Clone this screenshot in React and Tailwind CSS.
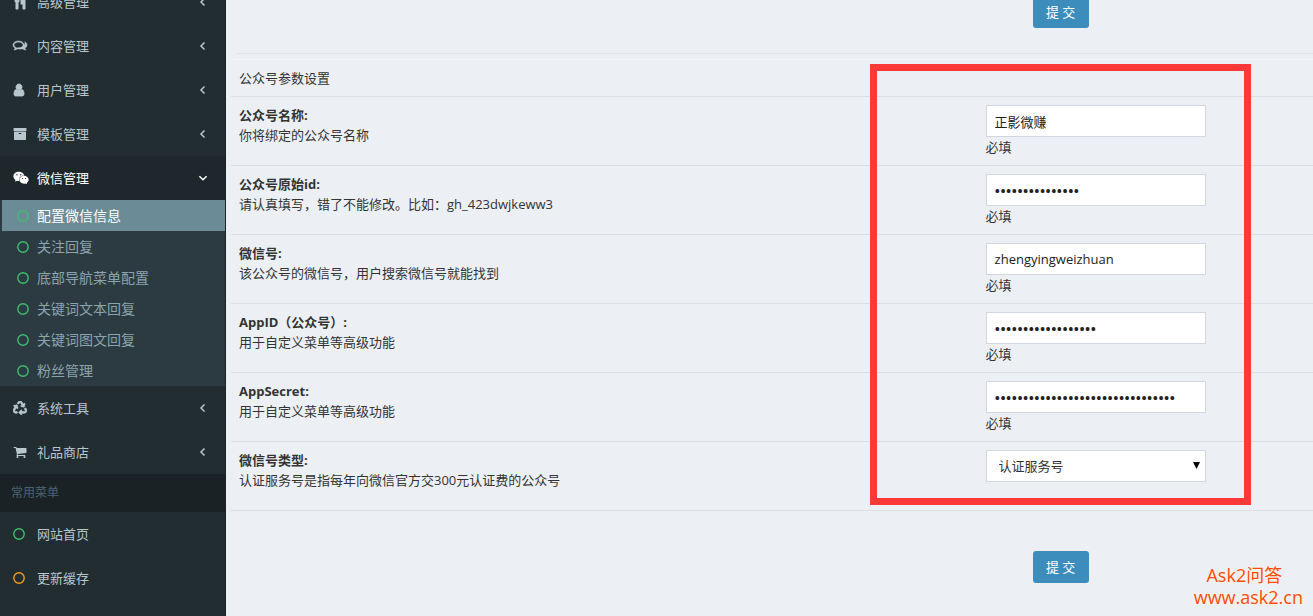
import React from "react";
import { FaRecycle, FaWeixin } from "react-icons/fa";

const iconPaths = {
  cutlery:
    "M832 128v640q0 61-35.500 111t-92.500 70v779q0 52-38 90t-90 38h-128q-52 0-90-38t-38-90v-779q-57-20-92.500-70t-35.500-111v-640q0-26 19-45t45-19 45 19 19 45v416q0 26 19 45t45 19 45-19 19-45v-416q0-26 19-45t45-19 45 19 19 45v416q0 26 19 45t45 19 45-19 19-45v-416q0-26 19-45t45-19 45 19 19 45zm768 0v1600q0 52-38 90t-90 38h-128q-52 0-90-38t-38-90v-512h-224q-13 0-22.500-9.500t-9.500-22.500v-800q0-132 94-226t226-94h256q26 0 45 19t19 45z",
  comments:
    "M704 384q-153 0-286 52t-211.500 141-78.500 191q0 82 53 158t149 132l97 56-35 84q34-20 62-39l44-31 53 10q78 14 153 14 153 0 286-52t211.500-141 78.500-191-78.500-191-211.500-141-286-52zM704 256q191 0 353.500 68.500t256.500 186.500 94 257-94 257-256.500 186.500-353.500 68.500q-86 0-176-16-124 88-278 128-36 9-86 16h-3q-11 0-20.500-8t-11.500-21q-1-3-1-6.500t0.500-6.500 2-6l2.500-5t3.500-5.500 4-5 4.500-5 4-4.500q5-6 23-25t26-29.500 22.500-29 25-38.500 20.500-44q-124-72-195-177t-71-224q0-139 94-257t256.500-186.500 353.500-68.500zM1526 1169q10 24 20.500 44t25 38.500 22.500 29 26 29.500 23 25q1 1 4 4.500t4.500 5 4 5 3.500 5.500l2.500 5t2 6 0.500 6.500-1 6.500q-3 14-13 22t-22 7q-50-7-86-16-154-40-278-128-90 16-176 16-271 0-472-132 58 4 88 4 161 0 309-45t264-129q125-92 192-212t67-254q0-77-23-152 129 71 204 178t75 230q0 120-71 224.500t-195 176.500z",
  user: "M1408 1399q0 109-62.500 187t-150.500 78h-854q-88 0-150.500-78t-62.500-187q0-85 8.500-160.500t31.500-152 58.500-131 94-89 134.500-34.500q131 128 313 128t313-128q76 0 134.500 34.500t94 89 58.500 131 31.500 152 8.500 160.500zm-256-887q0 159-112.500 271.500t-271.500 112.500-271.500-112.500-112.500-271.500 112.500-271.500 271.500-112.500 271.500 112.500 112.500 271.500z",
  archive:
    "M1088 832q0-26-19-45t-45-19h-256q-26 0-45 19t-19 45 19 45 45 19h256q26 0 45-19t19-45zm576-192v960q0 26-19 45t-45 19h-1408q-26 0-45-19t-19-45v-960q0-26 19-45t45-19h1408q26 0 45 19t19 45zm64-448v256q0 26-19 45t-45 19h-1536q-26 0-45-19t-19-45v-256q0-26 19-45t45-19h1536q26 0 45 19t19 45z",
  cart: "M704 1536q0 52-38 90t-90 38-90-38-38-90 38-90 90-38 90 38 38 90zm896 0q0 52-38 90t-90 38-90-38-38-90 38-90 90-38 90 38 38 90zm128-1088v512q0 24-16.500 42.500t-40.500 21.500l-1044 122q13 60 13 70 0 16-24 64h920q26 0 45 19t19 45-19 45-45 19h-1024q-26 0-45-19t-19-45q0-11 8-31.500t16-36 21.500-40 15.500-29.500l-177-823h-204q-26 0-45-19t-19-45 19-45 45-19h256q16 0 28.500 6.500t19.500 15.500 13 24.500 8 26 5.500 29.500 4.500 26h1201q26 0 45 19t19 45z",
};

const Glyph = ({ name, weight = 0 }) => (
  <svg
    viewBox="0 0 1792 1792"
    className="w-[14px] h-[14px] overflow-visible"
    fill="currentColor"
    stroke="currentColor"
    strokeWidth={weight}
  >
    <path d={iconPaths[name]} />
  </svg>
);

const Circle = ({ className }) => (
  <svg
    viewBox="0 0 12 12"
    className={`w-3 h-3 ${className}`}
    fill="none"
    stroke="currentColor"
    strokeWidth="1.4"
  >
    <circle cx="6" cy="6" r="5.2" />
  </svg>
);

const Arrow = ({ open }) => (
  <svg
    viewBox="0 0 10 10"
    className="w-[10px] h-[10px]"
    fill="none"
    stroke="currentColor"
    strokeWidth="1.5"
  >
    <path d={open ? "M1.4 3.2 L5 6.8 L8.600 3.2" : "M6.500 1.500 L3 5 L6.500 8.500"} />
  </svg>
);

const MenuItem = ({ icon, title, arrow, active }) => (
  <a
    href="#"
    className={`flex items-center h-11 pl-[13px] pr-[17px] text-[13px] ${
      active ? "bg-[#1e282c] text-white" : "text-[#b8c7ce]"
    }`}
  >
    <span className="w-6 shrink-0">{icon}</span>
    <span className="flex-1">{title}</span>
    {arrow && <Arrow open={active} />}
  </a>
);

const subMenu = [
  "配置微信信息",
  "关注回复",
  "底部导航菜单配置",
  "关键词文本回复",
  "关键词图文回复",
  "粉丝管理",
];

const Sidebar = () => (
  <aside className="w-[226px] shrink-0 overflow-hidden bg-[#222d32] border-r border-[#1a2226]">
    <nav className="-mt-5">
      <MenuItem icon={<Glyph name="cutlery" />} title="高级管理" arrow />
      <MenuItem
        icon={<Glyph name="comments" weight={70} />}
        title="内容管理"
        arrow
      />
      <MenuItem
        icon={<Glyph name="user" weight={110} />}
        title="用户管理"
        arrow
      />
      <MenuItem icon={<Glyph name="archive" />} title="模板管理" arrow />
      <MenuItem
        icon={<FaWeixin className="w-4 h-4" />}
        title="微信管理"
        arrow
        active
      />
      <ul className="bg-[#2c3b41] pl-[2px]">
        {subMenu.map((title, index) => (
          <li key={title}>
            <a
              href="#"
              className={`flex items-center gap-2 h-[31px] pl-[15px] text-sm ${
                index === 0 ? "bg-[#6b8b97] text-white" : "text-[#8aa4af]"
              }`}
            >
              <Circle className="text-[#3fbf6b]" />
              {title}
            </a>
          </li>
        ))}
      </ul>
      <MenuItem
        icon={
          <FaRecycle className="w-[14px] h-[14px] stroke-current stroke-[24px]" />
        }
        title="系统工具"
        arrow
      />
      <MenuItem icon={<Glyph name="cart" />} title="礼品商店" arrow />
      <div className="flex items-center h-[38px] pl-[11px] text-xs bg-[#1a2226] text-[#4b646f]">
        常用菜单
      </div>
      <MenuItem icon={<Circle className="text-[#3fbf6b]" />} title="网站首页" />
      <MenuItem icon={<Circle className="text-[#f39c12]" />} title="更新缓存" />
    </nav>
  </aside>
);

const fields = [
  {
    id: "name",
    label: "公众号名称:",
    desc: "你将绑定的公众号名称",
    type: "text",
    value: "正影微赚",
  },
  {
    id: "origin",
    label: "公众号原始id:",
    desc: "请认真填写，错了不能修改。比如：gh_423dwjkeww3",
    type: "password",
    value: "0".repeat(15),
  },
  {
    id: "account",
    label: "微信号:",
    desc: "该公众号的微信号，用户搜索微信号就能找到",
    type: "text",
    value: "zhengyingweizhuan",
  },
  {
    id: "appid",
    label: "AppID（公众号）:",
    desc: "用于自定义菜单等高级功能",
    type: "password",
    value: "0".repeat(18),
  },
  {
    id: "secret",
    label: "AppSecret:",
    desc: "用于自定义菜单等高级功能",
    type: "password",
    value: "0".repeat(32),
  },
  {
    id: "type",
    label: "微信号类型:",
    desc: "认证服务号是指每年向微信官方交300元认证费的公众号",
    type: "select",
    value: "认证服务号",
  },
];

const Field = ({ field }) => {
  if (field.type === "select") {
    return (
      <div className="relative w-[220px]">
        <select
          id={field.id}
          className="block w-full h-8 pl-3 pr-6 bg-white border border-[#d2d6de] appearance-none"
        >
          <option>{field.value}</option>
        </select>
        <svg
          viewBox="0 0 6 6"
          className="absolute right-[6px] top-3 w-[7px] h-[7px] pointer-events-none"
        >
          <path d="M0 0h6L3 6z" fill="#000" />
        </svg>
      </div>
    );
  }
  return (
    <>
      <input
        id={field.id}
        type={field.type}
        defaultValue={field.value}
        autoComplete="off"
        className={`block w-[220px] h-8 px-2 bg-white border border-[#d2d6de] text-[#222] ${
          field.type === "password" ? "text-[15px] font-semibold" : ""
        }`}
      />
      <p>必填</p>
    </>
  );
};

const SubmitButton = () => (
  <div className="pl-[69%]">
    <button
      type="submit"
      className="block ml-[55px] w-14 h-8 rounded-[3px] bg-[#3c8dbc] text-white"
    >
      提 交
    </button>
  </div>
);

const App = () => {
  return (
    <div className="relative flex min-h-screen overflow-hidden bg-[#ecf0f5] text-[13px] leading-5 text-[#333] font-['Open_Sans','Noto_Sans_CJK_SC',sans-serif]">
      <Sidebar />
      <main className="flex-1 min-w-0 pl-[5px]">
        <form className="-mt-1" onSubmit={(e) => e.preventDefault()}>
          <SubmitButton />
          <hr className="mt-[25px] mb-[5px] ml-[5px] border-[#e2e5e9]" />

          <div className="relative">
            <table className="w-full border-collapse">
              <thead>
                <tr className="border-t border-[#f4f4f4]">
                  <th colSpan={2} className="p-2 text-left font-normal">
                    公众号参数设置
                  </th>
                </tr>
              </thead>
              <tbody>
                {fields.map((field) => (
                  <tr
                    key={field.id}
                    className="h-[69px] border-y border-[#dcdee1] align-top"
                  >
                    <td className="w-[69%] p-2">
                      <label htmlFor={field.id} className="block font-bold">
                        {field.label}
                      </label>
                      <p>{field.desc}</p>
                    </td>
                    <td className="p-2">
                      <Field field={field} />
                    </td>
                  </tr>
                ))}
              </tbody>
            </table>
            {/* highlight frame */}
            <div className="absolute top-[5px] bottom-[6px] right-[62px] w-[381px] border-[7px] border-[#fd3838] pointer-events-none" />
          </div>

          <div className="mt-10">
            <SubmitButton />
          </div>
        </form>
      </main>

      <div className="absolute right-[10px] bottom-2 text-center text-lg leading-[22px] text-[#ff4a10] [text-shadow:0_0_3px_#fff8d0]">
        <p className="pr-2">Ask2问答</p>
        <p>www.ask2.cn</p>
      </div>
    </div>
  );
};

export default App;
